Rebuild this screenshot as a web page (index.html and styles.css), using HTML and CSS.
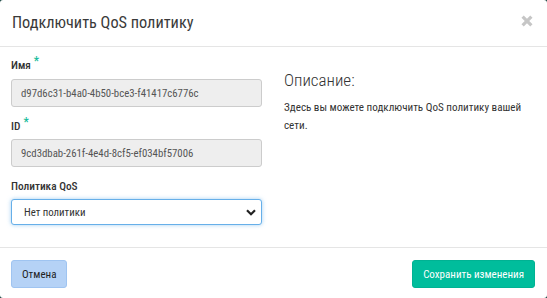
FILE: index.html
```html
<!DOCTYPE html>
<html lang="ru">
<head>
<meta charset="utf-8">
<title>Подключить QoS политику</title>
<link rel="stylesheet" href="styles.css">
</head>
<body>
<div class="modal">
  <div class="modal-header">
    <h3 class="modal-title">Подключить QoS политику</h3>
    <span class="close" aria-label="Закрыть">
      <svg width="12" height="12" viewBox="0 0 12 12"><path d="M1.6 1.6 L10.4 10.4 M10.4 1.6 L1.6 10.4" stroke="#c6c6c6" stroke-width="3.2" stroke-linecap="butt"/></svg>
    </span>
  </div>
  <div class="modal-body">
    <div class="form-col">
      <div class="form-group">
        <label class="label">Имя<span class="req">*</span></label>
        <input class="input" type="text" value="d97d6c31-b4a0-4b50-bce3-f41417c6776c" readonly>
      </div>
      <div class="form-group">
        <label class="label">ID<span class="req">*</span></label>
        <input class="input" type="text" value="9cd3dbab-261f-4e4d-8cf5-ef034bf57006" readonly>
      </div>
      <div class="form-group">
        <label class="label">Политика QoS</label>
        <div class="select-wrap">
          <select class="select"><option>Нет политики</option></select>
          <svg class="chevron" width="10" height="7" viewBox="0 0 10 7"><path d="M1 1.2 L5 5.2 L9 1.2" fill="none" stroke="#222" stroke-width="2.2"/></svg>
        </div>
      </div>
    </div>
    <div class="desc-col">
      <h3 class="desc-title">Описание:</h3>
      <p class="desc-text">Здесь вы можете подключить QoS политику вашей сети.</p>
    </div>
  </div>
  <div class="modal-footer">
    <button class="btn btn-cancel">Отмена</button>
    <button class="btn btn-primary">Сохранить изменения</button>
  </div>
</div>
</body>
</html>
```
FILE: styles.css
```css
html, body {
  margin: 0;
  padding: 0;
  width: 547px;
  height: 298px;
  overflow: hidden;
  background: #16433e;
}
body {
  font-family: "Roboto", "Open Sans", sans-serif;
  font-stretch: 75%;
  color: #333;
}
.modal {
  width: 547px;
  height: 298px;
  background: #fff;
  border-radius: 3px;
  display: flex;
  flex-direction: column;
  box-sizing: border-box;
}
.modal-header {
  height: 46px;
  border-bottom: 1px solid #e5e5e5;
  display: flex;
  align-items: center;
  justify-content: space-between;
  padding: 0 14px 0 12px;
  box-sizing: content-box;
}
.modal-title {
  margin: 0;
  font-size: 16.3px;
  font-weight: 400;
  color: #3a3a3a;
  padding-bottom: 2px;
}
.close {
  display: flex;
  padding-bottom: 5px;
}
.modal-body {
  flex: 1;
  display: grid;
  grid-template-columns: 251px 1fr;
  column-gap: 22px;
  padding: 11px 11px 0 11px;
}
.form-group {
  display: flex;
  flex-direction: column;
  margin-bottom: 12px;
}
.label {
  font-size: 11.3px;
  font-weight: 500;
  line-height: 15px;
  margin-bottom: 6px;
  color: #333;
}
.req {
  color: #1abc9c;
  font-size: 12px;
  margin-left: 3px;
  position: relative;
  top: -4px;
}
.input {
  height: 28px;
  box-sizing: border-box;
  border: 1px solid #ccc;
  border-radius: 3px;
  background: #eee;
  padding: 0 9px;
  font-family: inherit;
  font-stretch: 75%;
  font-size: 10.8px;
  color: #555;
  outline: none;
}
.form-group:nth-child(2) .label { margin-bottom: 5px; }
.form-group:nth-child(3) .label { margin-bottom: 5px; }
.select-wrap {
  position: relative;
}
.select {
  width: 100%;
  height: 26px;
  box-sizing: border-box;
  border: 1px solid #66afe9;
  border-radius: 3px;
  background: #fff;
  box-shadow: 0 0 4px rgba(102, 175, 233, 0.6);
  -webkit-appearance: none;
  appearance: none;
  padding: 0 12px;
  font-family: inherit;
  font-stretch: 75%;
  font-size: 10.8px;
  color: #333;
  outline: none;
}
.chevron {
  position: absolute;
  right: 6px;
  top: 10px;
  pointer-events: none;
}
.desc-col {
  padding-top: 11px;
}
.desc-title {
  margin: 0 0 8px 0;
  font-size: 17px;
  font-weight: 300;
  line-height: 22px;
  color: #333;
}
.desc-text {
  margin: 0;
  font-size: 11.1px;
  line-height: 18px;
  color: #333;
}
.modal-footer {
  border-top: 1px solid #e5e5e5;
  display: flex;
  justify-content: space-between;
  align-items: flex-start;
  padding: 12px 12px 0 11px;
  height: 51px;
  box-sizing: border-box;
}
.btn {
  height: 28px;
  border-radius: 3px;
  font-family: inherit;
  font-stretch: 75%;
  font-size: 11px;
  padding: 0 10px;
  cursor: pointer;
}
.btn-cancel {
  background: #b5d2f6;
  border: 1px solid #9fc4f1;
  color: #222;
}
.btn-primary {
  background: #00bd9c;
  border: 1px solid #00b293;
  color: #fff;
}
```
